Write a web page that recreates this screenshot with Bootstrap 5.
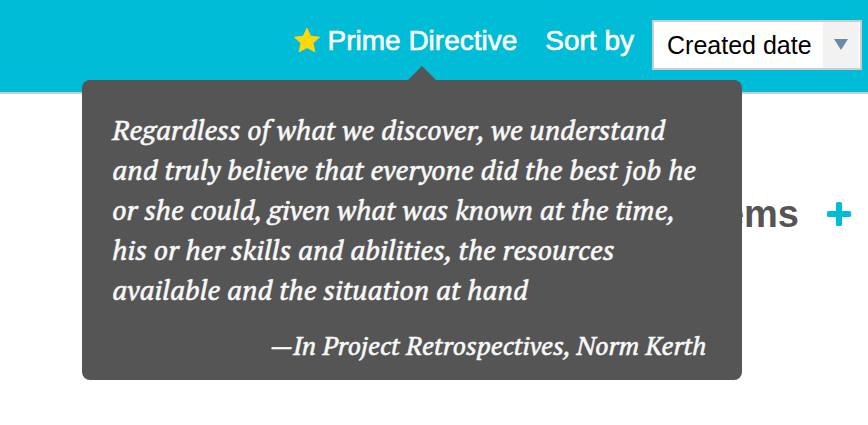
<!DOCTYPE html>
<html lang="en">
<head>
<meta charset="utf-8">
<meta name="viewport" content="width=device-width, initial-scale=1">
<title>Retrospective board</title>
<link href="https://cdn.jsdelivr.net/npm/bootstrap@5.3.0/dist/css/bootstrap.min.css" rel="stylesheet">
<style>
  body { font-family: "Liberation Sans", Arial, sans-serif; color: #555; background: #fff; }
  .topbar { background: #00bcd7; border-bottom: 2px solid #ccc; padding: 20px 6px 22px; gap: 18px; }
  .bar-text { font-size: 28px; line-height: 42px; color: #fff; -webkit-text-stroke: thin #fff; }
  .directive { gap: 7px; margin-right: 10px; }
  .directive svg { width: 28px; height: 26px; margin-bottom: 2px; }
  .sort-select {
    width: 210px; height: 50px; padding: 0 40px 0 13px;
    font-size: 25px; line-height: 46px; color: #000;
    border: 2px solid #ccc; border-radius: 0; background-color: #fff;
    background-image: url("data:image/svg+xml,%3csvg xmlns='http://www.w3.org/2000/svg' viewBox='0 0 36 46'%3e%3cpath fill='%23f2f2f2' d='M0 0h36v46H0z'/%3e%3cpath fill='%23698ba5' d='M11 17h14l-7 11z'/%3e%3c/svg%3e");
    background-size: 36px 46px; background-position: right 1px center;
  }
  .quote-pop {
    position: absolute; z-index: 10; top: 60px; right: -215px; width: 660px;
    padding: 30px 36px 15px 30px; border-radius: 8px; background: #555; color: #f8f8f8;
    font: italic 28px/40px "PT Serif", "Liberation Serif", serif; text-align: left;
    -webkit-text-stroke: thin #f8f8f8;
  }
  .quote-pop::before {
    content: ""; position: absolute; bottom: 100%; left: 326px;
    border: 14px solid transparent; border-top: 0; border-bottom-color: #555;
  }
  .quote-pop figcaption { margin-top: 15px; font-size: 26px; text-align: right; }
  .lane-head { padding: 94px 17px 0; gap: 28px; }
  .lane-head h2 { font-size: 38px; line-height: 52px; }
  .add-btn svg { width: 24px; height: 24px; }
</style>
<script src="https://cdn.jsdelivr.net/npm/bootstrap@5.3.0/dist/js/bootstrap.bundle.min.js"></script>
</head>
<body class="min-vh-100 d-flex flex-column">
<header class="topbar d-flex justify-content-end align-items-start">
  <div class="position-relative">
    <button type="button" class="directive btn border-0 p-0 rounded-0 d-flex align-items-center bar-text" aria-describedby="directive-text">
      <svg viewBox="0 0 28 26" aria-hidden="true"><path fill="#ffd70b" stroke="#ffd70b" stroke-linejoin="round" d="M15 1.200l3.700 8 8.800 1-6.600 5.900 1.900 8.700L15 20.500l-7.800 4.300 1.900-8.700L2.500 10.200l8.800-1z"/></svg>
      <span>Prime Directive</span>
    </button>
    <figure id="directive-text" class="quote-pop m-0" role="tooltip">
      <blockquote class="m-0">Regardless of what we discover, we understand and truly believe that everyone did the best job he or she could, given what was known at the time, his or her skills and abilities, the resources available and the situation at hand</blockquote>
      <figcaption>—In Project Retrospectives, Norm Kerth</figcaption>
    </figure>
  </div>
  <label class="bar-text" for="sort">Sort by</label>
  <select id="sort" class="form-select sort-select"><option>Created date</option></select>
</header>
<main class="flex-grow-1">
  <div class="lane-head d-flex justify-content-end align-items-center">
    <h2 class="m-0 fw-bold">Items</h2>
    <button type="button" class="add-btn btn border-0 p-0 d-flex" aria-label="Add item">
      <svg viewBox="0 0 24 24" aria-hidden="true"><path fill="#00bcd7" d="M10.500 0h3a1.500 1.500 0 0 1 1.500 1.500V9h7.500A1.500 1.500 0 0 1 24 10.500v3a1.500 1.500 0 0 1-1.500 1.500H15v7.500a1.500 1.500 0 0 1-1.500 1.500h-3A1.500 1.500 0 0 1 9 22.500V15H1.500A1.500 1.500 0 0 1 0 13.500v-3A1.500 1.500 0 0 1 1.500 9H9V1.500A1.500 1.500 0 0 1 10.500 0z"/></svg>
    </button>
  </div>
</main>
</body>
</html>
